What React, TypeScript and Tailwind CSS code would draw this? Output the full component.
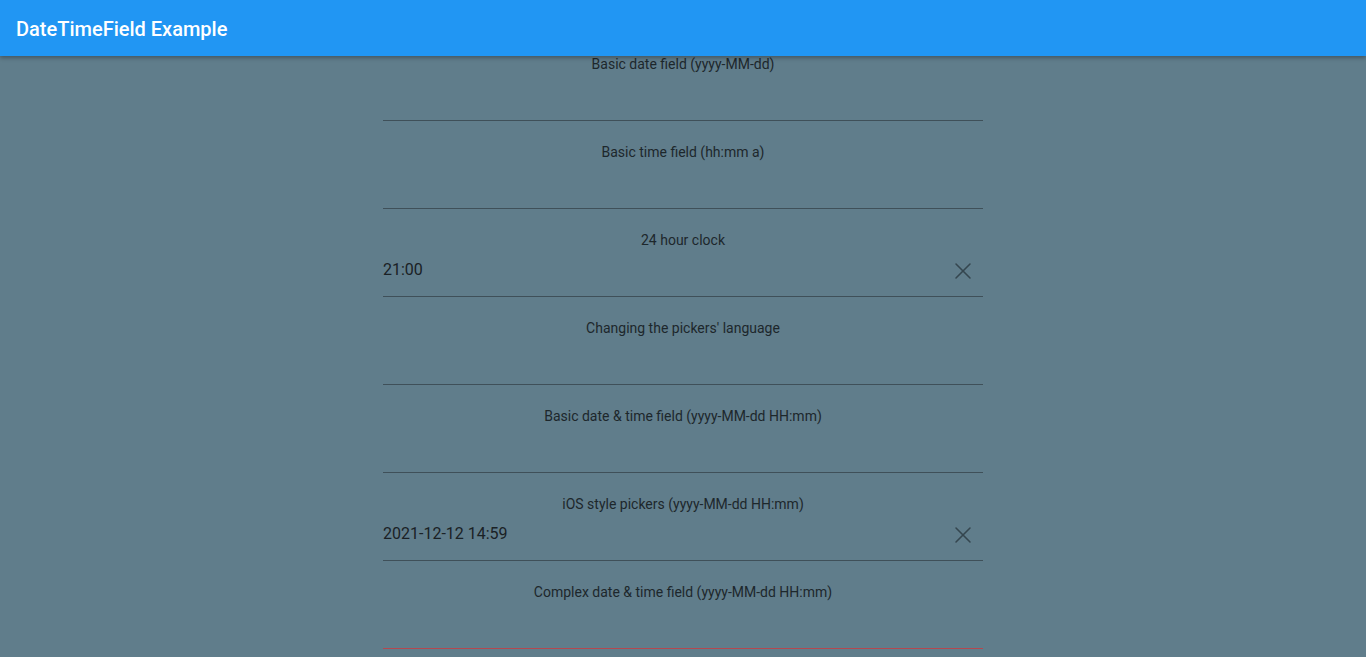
import { X } from "lucide-react";

type Field = { label: string; value?: string; error?: boolean };

const fields: Field[] = [
  { label: "Basic date field (yyyy-MM-dd)" },
  { label: "Basic time field (hh:mm a)" },
  { label: "24 hour clock", value: "21:00" },
  { label: "Changing the pickers' language" },
  { label: "Basic date & time field (yyyy-MM-dd HH:mm)" },
  { label: "iOS style pickers (yyyy-MM-dd HH:mm)", value: "2021-12-12 14:59" },
  { label: "Complex date & time field (yyyy-MM-dd HH:mm)", error: true },
];

const DateField = ({ label, value, error }: Field) => {
  return (
    <div
      className={`flex flex-col h-[65px] mb-[23px] border-b ${
        error ? "border-[#b5484f]" : "border-[#3f5059]"
      }`}
    >
      <p className="h-4 text-center text-[14px] leading-4 text-[#1d272c]">{label}</p>
      <div className="mt-[10px] h-6 flex items-center justify-between">
        <span className="text-[16px] leading-6 text-[#1a2125]">{value}</span>
        {value && (
          <X className="mr-[6px] mt-[2px] text-[#35464f]" size={28} strokeWidth={1.3} />
        )}
      </div>
    </div>
  );
};

export default function App() {
  return (
    <div
      className="w-[1366px] h-[657px] overflow-hidden bg-[#607d8b] flex flex-col"
      style={{ fontFamily: "Roboto, 'Liberation Sans', sans-serif" }}
    >
      <header className="h-14 shrink-0 bg-[#2196f3] flex items-center px-4 shadow-[0_2px_4px_rgba(0,0,0,0.3)] z-10">
        <h1 className="text-[20px] font-medium text-white pt-[2px]">DateTimeField Example</h1>
      </header>
      <main className="w-[600px] mx-auto">
        {fields.map((f) => (
          <DateField key={f.label} {...f} />
        ))}
      </main>
    </div>
  );
}
